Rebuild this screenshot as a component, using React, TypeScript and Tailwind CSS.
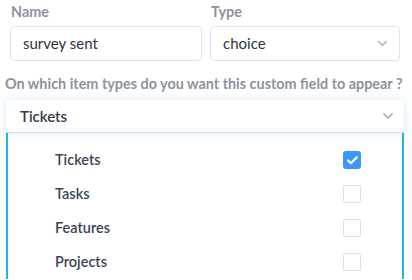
import { ChevronDown, Check } from "lucide-react";

const items = [
  { name: "Tickets", checked: true },
  { name: "Tasks", checked: false },
  { name: "Features", checked: false },
  { name: "Projects", checked: false },
];

export default function App() {
  return (
    <div className="h-[280px] w-[412px] overflow-hidden bg-white font-['Lato',sans-serif]">
      <div className="flex gap-2 pl-[10px] pt-[1px]">
        <div className="flex w-[192px] flex-col">
          <label className="pl-px text-[14.4px] font-bold text-[#8d939c]">Name</label>
          <div className="mt-[3px] flex h-[35px] items-center rounded-[4px] border border-[#e2e4e9] px-3 text-[15px] text-[#2e3440]">
            survey sent
          </div>
        </div>
        <div className="flex w-[190px] flex-col">
          <label className="pl-px text-[14.4px] font-bold text-[#8d939c]">Type</label>
          <div className="mt-[3px] flex h-[35px] items-center justify-between rounded-[4px] border border-[#e2e4e9] pl-3 pr-[9px] text-[15px] text-[#2e3440]">
            choice
            <ChevronDown className="h-[15px] w-[15px] text-[#b4bac6]" strokeWidth={2.5} />
          </div>
        </div>
      </div>
      <p className="pl-[5px] pt-[12px] text-[14.4px] font-bold text-[#8d939c]">
        On which item types do you want this custom field to appear ?
      </p>
      <div className="ml-[6px] mt-[6px] w-[398px]">
        <div className="flex h-[33px] items-center justify-between rounded-t-[4px] border-b border-[#dcdde6] bg-white pl-[14px] pr-[8px] text-[15px] font-semibold text-[#353b48] shadow-[0_0_8px_rgba(140,190,230,0.35)]">
          Tickets
          <ChevronDown className="h-[16px] w-[16px] text-[#b4bac6]" strokeWidth={3} />
        </div>
        <div className="flex flex-col border-x-2 border-[#20b4e3] pt-[10px]">
          {items.map((it) => (
            <div key={it.name} className="flex h-[34px] items-center justify-between pl-[47px] pr-[41px]">
              <span className="text-[14.5px] font-semibold text-[#3c4455]">{it.name}</span>
              {it.checked ? (
                <span className="flex h-[18px] w-[18px] items-center justify-center rounded-[3px] bg-[#3d97f6]">
                  <Check className="h-[13px] w-[13px] text-white" strokeWidth={4} />
                </span>
              ) : (
                <span className="h-[18px] w-[18px] rounded-[3px] border border-[#dcdde5] bg-white" />
              )}
            </div>
          ))}
        </div>
      </div>
    </div>
  );
}
